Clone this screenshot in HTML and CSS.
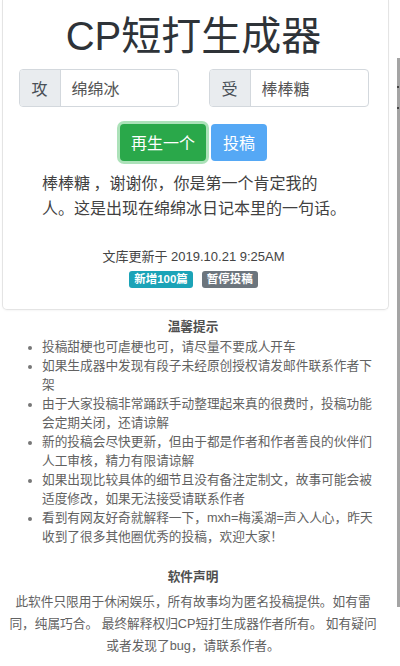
FILE: index.html
```html
<!DOCTYPE html>
<html lang="zh-CN">
<head>
<meta charset="utf-8">
<title>CP短打生成器</title>
<link rel="stylesheet" href="styles.css">
</head>
<body>
<div class="card">
  <h1 class="title">CP短打生成器</h1>
  <div class="inputs">
    <div class="group">
      <span class="prepend">攻</span>
      <span class="field">绵绵冰</span>
    </div>
    <div class="group">
      <span class="prepend">受</span>
      <span class="field">棒棒糖</span>
    </div>
  </div>
  <div class="actions">
    <button class="btn btn-green">再生一个</button>
    <button class="btn btn-blue">投稿</button>
  </div>
  <p class="quote">棒棒糖 ，谢谢你，你是第一个肯定我的人。这是出现在绵绵冰日记本里的一句话。</p>
  <p class="update">文库更新于 2019.10.21 9:25AM</p>
  <div class="badges">
    <span class="badge badge-teal">新增100篇</span>
    <span class="badge badge-gray">暂停投稿</span>
  </div>
</div>

<div class="notes">
  <h2 class="notes-title">温馨提示</h2>
  <ul class="tips">
    <li>投稿甜梗也可虐梗也可，请尽量不要成人开车</li>
    <li>如果生成器中发现有段子未经原创授权请发邮件联系作者下架</li>
    <li>由于大家投稿非常踊跃手动整理起来真的很费时，投稿功能会定期关闭，还请谅解</li>
    <li>新的投稿会尽快更新，但由于都是作者和作者善良的伙伴们人工审核，精力有限请谅解</li>
    <li>如果出现比较具体的细节且没有备注定制文，故事可能会被适度修改，如果无法接受请联系作者</li>
    <li>看到有网友好奇就解释一下，mxh=梅溪湖=声入人心，昨天收到了很多其他圈优秀的投稿，欢迎大家！</li>
  </ul>
  <h2 class="notes-title decl-title">软件声明</h2>
  <p class="decl">此软件只限用于休闲娱乐，所有故事均为匿名投稿提供。如有雷同，纯属巧合。 最终解释权归CP短打生成器作者所有。 如有疑问或者发现了bug，请联系作者。</p>
</div>

<div class="scrollbar"><span class="mark mark-1"></span><span class="mark mark-2"></span></div>
</body>
</html>
```

FILE: styles.css
```css
* { box-sizing: border-box; }

html, body {
  margin: 0;
  padding: 0;
  background: #ffffff;
}

body {
  position: relative;
  width: 400px;
  min-height: 666px;
  overflow: hidden;
  font-family: "Liberation Sans", "Noto Sans CJK SC", sans-serif;
  color: #444;
}

.card {
  margin-left: 2px;
  width: 387px;
  border: 1px solid #e4e4e4;
  border-top: none;
  border-radius: 0 0 5px 5px;
  box-shadow: 0 1px 2px rgba(0, 0, 0, 0.04);
  padding: 12px 4px 21px 0;
  display: flex;
  flex-direction: column;
  align-items: center;
}

.title {
  margin: 0;
  font-size: 40px;
  line-height: 48px;
  font-weight: 400;
  color: #2e3338;
  text-align: center;
}

.inputs {
  margin-top: 9px;
  display: flex;
  gap: 30px;
}

.group {
  width: 160px;
  height: 38px;
  display: flex;
  border: 1px solid #d3d8dd;
  border-radius: 4px;
  overflow: hidden;
  font-size: 16px;
  color: #495057;
}

.prepend {
  width: 41px;
  flex: none;
  display: flex;
  align-items: center;
  justify-content: center;
  background: #e9ecef;
  border-right: 1px solid #d3d8dd;
  font-family: "Noto Sans CJK SC", sans-serif;
}

.field {
  display: flex;
  align-items: center;
  padding-left: 11px;
  color: #555;
  font-family: "Noto Sans CJK SC", sans-serif;
}

.actions {
  margin-top: 17px;
  display: flex;
  gap: 5px;
}

.btn {
  height: 37px;
  border: none;
  border-radius: 4px;
  color: #fff;
  font-size: 16px;
  font-family: "Noto Sans CJK SC", sans-serif;
  padding: 0 12px;
  line-height: 37px;
}

.btn-green {
  background: #2aa84a;
  box-shadow: 0 0 0 3px rgba(72, 190, 100, 0.45);
  padding: 0 11px;
}

.btn-blue {
  background: #55a8f5;
  padding: 0 12px;
}

.quote {
  align-self: flex-start;
  margin: 9px 0 0 39px;
  width: 306px;
  font-size: 16px;
  line-height: 25px;
  color: #414141;
  font-family: "Noto Sans CJK SC", sans-serif;
}

.update {
  margin: 27px 0 0;
  font-size: 13px;
  line-height: 20px;
  color: #444;
}

.badges {
  margin-top: 4px;
  display: flex;
  gap: 9px;
}

.badge {
  height: 17px;
  line-height: 17px;
  padding: 0 5px;
  border-radius: 3px;
  font-size: 11.5px;
  font-weight: 700;
  color: #fff;
}

.badge-teal { background: #1ba3b7; }
.badge-gray { background: #6c757d; }

.notes {
  width: 386px;
  color: #626262;
  font-size: 12.7px;
  font-family: "Liberation Sans", "Noto Sans CJK SC", sans-serif;
}

.notes-title {
  margin: 8px 0 0;
  font-size: 12.7px;
  line-height: 19px;
  font-weight: 700;
  color: #4f4f4f;
  text-align: center;
}

.tips {
  margin: 1px 0 0;
  padding: 0 0 0 42px;
  width: 378px;
  line-height: 19px;
}

.tips li::marker {
  color: #777;
}

.decl-title {
  margin-top: 21px;
}

.decl {
  margin: 4px 0 0 6px;
  width: 374px;
  line-height: 22px;
  text-align: center;
}

.scrollbar {
  position: absolute;
  right: 0;
  top: 58px;
  width: 3px;
  height: 549px;
  background: #a4a4a4;
}

.mark {
  position: absolute;
  left: 0;
  width: 2px;
  height: 2px;
  background: #444;
}

.mark-1 { top: 28px; }
.mark-2 { top: 49px; }
```
